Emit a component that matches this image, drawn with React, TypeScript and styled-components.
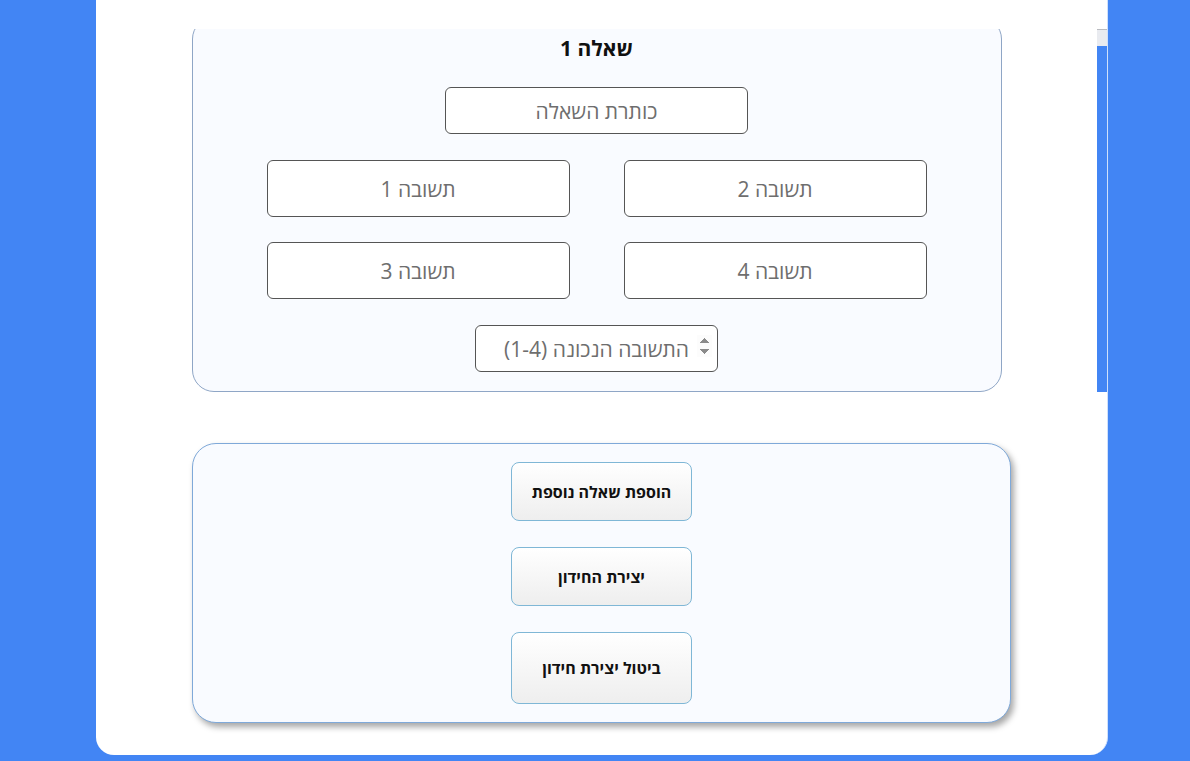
import { useLayoutEffect, useRef } from "react";
import styled, { createGlobalStyle } from "styled-components";

const GlobalStyle = createGlobalStyle`
  html, body {
    margin: 0;
    padding: 0;
    background: #4285f4;
  }
  body {
    font-family: "Open Sans", "DejaVu Sans", sans-serif;
  }
`

const Page = styled.div`
  width: 1012px;
  margin-left: 96px;
  height: 755px;
  box-sizing: border-box;
  padding-top: 29px;
  background: #fff;
  border-radius: 0 0 18px 18px;
  border-right: 1px solid #cfe0fb;
  display: flex;
  flex-direction: column;
  align-items: center;
`

const ScrollArea = styled.div`
  width: 100%;
  height: 363px;
  display: flex;
`

const Viewport = styled.div`
  flex: 1;
  overflow: hidden;
`

// the page's own scrollbar, drawn (the headless browser uses overlay bars)
const ScrollTrack = styled.div`
  width: 10px;
  background: #e9ebf0;
  border-top: 1px solid #b9bbc0;
  box-sizing: border-box;
  display: flex;
  flex-direction: column;
  justify-content: flex-end;
`

const ScrollThumb = styled.div<{ $h: number }>`
  height: ${(p) => p.$h}px;
  background: #4285f4;
`

const QuestionCard = styled.div`
  width: 810px;
  margin: 0 auto;
  box-sizing: border-box;
  padding: 18px 0 19px;
  background: #f9fbff;
  border: 1px solid #8fa6c6;
  border-radius: 22px;
  display: flex;
  flex-direction: column;
  align-items: center;
  direction: rtl;
`

const QuestionTitle = styled.h3`
  margin: 0 0 27px;
  font-family: "Open Sans", "DejaVu Sans", sans-serif;
  font-size: 21px;
  line-height: 24px;
  font-weight: bold;
  color: #111;
`

const TextField = styled.input<{ $h: number }>`
  width: 303px;
  height: ${(p) => p.$h}px;
  box-sizing: border-box;
  border: 1px solid #555;
  border-radius: 6px;
  background: #fff;
  font-family: "Open Sans", "DejaVu Sans", sans-serif;
  font-size: 21px;
  text-align: center;
  color: #222;
  outline: none;
  &::placeholder {
    color: #6e6e6e;
  }
`

const AnswerGrid = styled.div`
  margin-top: 26px;
  display: grid;
  grid-template-columns: 303px 303px;
  column-gap: 54px;
  row-gap: 25px;
  direction: ltr;
`

const NumberField = styled.input`
  margin-top: 26px;
  width: 243px;
  height: 47px;
  box-sizing: border-box;
  padding: 0 5px 0 10px;
  border: 1px solid #555;
  border-radius: 6px;
  background: #fff;
  direction: ltr;
  text-align: right;
  font-family: "Open Sans", "DejaVu Sans", sans-serif;
  font-size: 21px;
  outline: none;
  &::placeholder {
    color: #6e6e6e;
  }
  &::-webkit-inner-spin-button {
    opacity: 1;
    margin-left: 8px;
    height: 22px;
  }
`

const ActionsCard = styled.div`
  margin-top: 51px;
  width: 819px;
  height: 280px;
  box-sizing: border-box;
  padding: 18px 0;
  background: #f9fbff;
  border: 1px solid #7fa9d9;
  border-radius: 24px;
  box-shadow: 3px 4px 6px rgba(0, 0, 0, 0.35);
  display: flex;
  flex-direction: column;
  align-items: center;
  gap: 26px;
`

const ActionButton = styled.button<{ $h: number }>`
  width: 181px;
  height: ${(p) => p.$h}px;
  border: 1px solid #7fb7d6;
  border-radius: 8px;
  background: linear-gradient(#ffffff, #eeeeee);
  font-family: "Open Sans", "DejaVu Sans", sans-serif;
  font-size: 16px;
  font-weight: bold;
  color: #111;
  direction: rtl;
  cursor: pointer;
`

export default function App() {
  const viewRef = useRef<HTMLDivElement>(null)

  useLayoutEffect(() => {
    if (viewRef.current) {
      viewRef.current.scrollTop = viewRef.current.scrollHeight
    }
  }, [])

  return (
    <>
      <GlobalStyle />
      <Page>
        <ScrollArea>
          <Viewport ref={viewRef}>
            <QuestionCard>
              <QuestionTitle>שאלה 1</QuestionTitle>
              <TextField $h={47} placeholder="כותרת השאלה" dir="rtl" />
              <AnswerGrid>
                <TextField $h={57} placeholder="תשובה 1" dir="rtl" />
                <TextField $h={57} placeholder="תשובה 2" dir="rtl" />
                <TextField $h={57} placeholder="תשובה 3" dir="rtl" />
                <TextField $h={57} placeholder="תשובה 4" dir="rtl" />
              </AnswerGrid>
              <NumberField type="number" min={1} max={4} placeholder={"\u202Bהתשובה הנכונה (1-4)\u202C"} />
            </QuestionCard>
          </Viewport>
          <ScrollTrack>
            <ScrollThumb $h={346} />
          </ScrollTrack>
        </ScrollArea>
        <ActionsCard>
          <ActionButton $h={59}>הוספת שאלה נוספת</ActionButton>
          <ActionButton $h={59}>יצירת החידון</ActionButton>
          <ActionButton $h={72}>ביטול יצירת חידון</ActionButton>
        </ActionsCard>
      </Page>
    </>
  )
}
